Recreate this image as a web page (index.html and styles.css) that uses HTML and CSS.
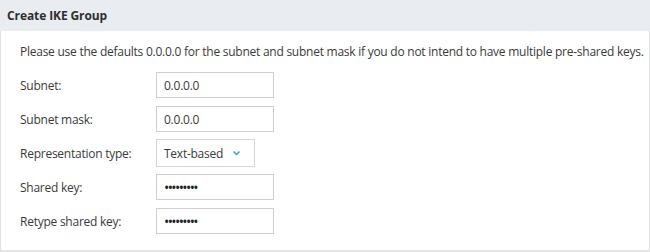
FILE: index.html
```html
<!DOCTYPE html>
<html lang="en">
<head>
    <meta charset="UTF-8">
    <meta name="viewport" content="width=device-width, initial-scale=1.0">
    <title>Create IKE Group</title>
    <link rel="stylesheet" href="styles.css">
</head>
<body>

    <div class="panel">
        <div class="panel-header">Create IKE Group</div>
        <div class="panel-body">
            <p class="hint">Please use the defaults 0.0.0.0 for the subnet and subnet mask if you do not intend to have multiple pre-shared keys.</p>

            <div class="form-row">
                <label for="subnet">Subnet:</label>
                <input type="text" id="subnet" value="0.0.0.0">
            </div>

            <div class="form-row">
                <label for="mask">Subnet mask:</label>
                <input type="text" id="mask" value="0.0.0.0">
            </div>

            <div class="form-row">
                <label>Representation type:</label>
                <div class="select">
                    <span>Text-based</span>
                    <svg width="9" height="6" viewBox="0 0 9 6"><path d="M1.5 1.5 L4.5 4.5 L7.5 1.5" fill="none" stroke="#3a9fcb" stroke-width="1.5"/></svg>
                </div>
            </div>

            <div class="form-row">
                <label for="key">Shared key:</label>
                <input type="password" id="key" value="secretkey">
            </div>

            <div class="form-row">
                <label for="key2">Retype shared key:</label>
                <input type="password" id="key2" value="secretkey">
            </div>
        </div>
    </div>

</body>
</html>
```

FILE: styles.css
```css
body {
    margin: 0;
    font-family: "Open Sans", sans-serif;
    font-size: 12px;
    letter-spacing: -0.25px;
    color: #3a3a3a;
    background-color: white;
}

.panel {
    width: 650px;
    height: 252px;
    box-sizing: border-box;
}

.panel-header {
    height: 31px;
    line-height: 31px;
    padding-left: 7px;
    background-color: #e9ecf0;
    font-weight: bold;
    letter-spacing: -0.1px;
    color: #2f2f2f;
}

.panel-body {
    height: 221px;
    box-sizing: border-box;
    border-left: 1px solid #e0e0e0;
    border-right: 1px solid #e0e0e0;
    border-bottom: 2px solid #e6e6e6;
    padding: 11px 0 0 19px;
}

.hint {
    margin: 0 0 10px 0;
    line-height: 20px;
    white-space: nowrap;
}

.form-row {
    display: flex;
    align-items: center;
    height: 26px;
    margin-bottom: 8px;
}

.form-row label {
    width: 136px;
}

.form-row input {
    width: 118px;
    height: 26px;
    box-sizing: border-box;
    border: 1px solid #cfcfcf;
    padding: 0 7px;
    font-family: "Open Sans", sans-serif;
    font-size: 12px;
    letter-spacing: -0.25px;
    color: #3a3a3a;
}

.form-row input[type="password"] {
    font-size: 14px;
    letter-spacing: -1.6px;
    color: #222;
}

.select {
    display: flex;
    align-items: center;
    justify-content: space-between;
    width: 99px;
    height: 28px;
    box-sizing: border-box;
    border: 1px solid #d6d6d6;
    padding: 0 13px 0 7px;
}
```
